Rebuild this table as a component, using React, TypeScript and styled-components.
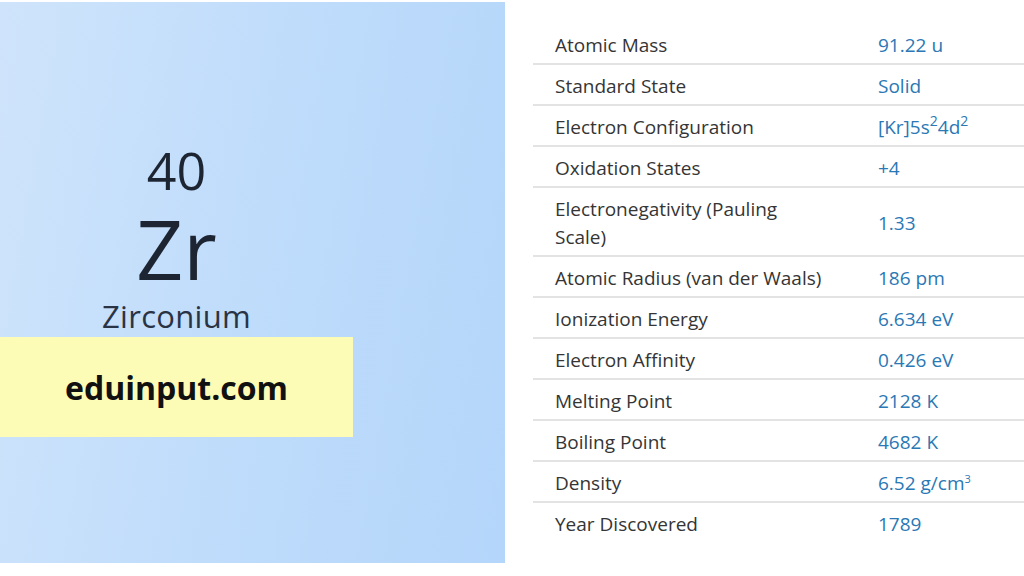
import React from 'react';
import styled, { createGlobalStyle } from 'styled-components';

const GlobalStyle = createGlobalStyle`
    html, body {
        margin: 0;
        padding: 0;
        background: #ffffff;
    }
    body {
        font-family: 'Open Sans', 'Noto Sans', sans-serif;
    }
`;

const Sup = styled.sup<{ $small?: boolean }>`
    font-size: ${(props) => (props.$small ? '11px' : '14px')};
    line-height: 0;
    vertical-align: ${(props) => (props.$small ? '7px' : '8px')};
`;

function getProperties() {
    return [
        { label: 'Atomic Mass', value: <>91.22 u</> },
        { label: 'Standard State', value: <>Solid</> },
        {
            label: 'Electron Configuration',
            value: (
                <>
                    [Kr]5s<Sup>2</Sup>4d<Sup>2</Sup>
                </>
            )
        },
        { label: 'Oxidation States', value: <>+4</> },
        { label: 'Electronegativity (Pauling Scale)', value: <>1.33</> },
        { label: 'Atomic Radius (van der Waals)', value: <>186 pm</> },
        { label: 'Ionization Energy', value: <>6.634 eV</> },
        { label: 'Electron Affinity', value: <>0.426 eV</> },
        { label: 'Melting Point', value: <>2128 K</> },
        { label: 'Boiling Point', value: <>4682 K</> },
        {
            label: 'Density',
            value: (
                <>
                    6.52 g/cm<Sup $small>3</Sup>
                </>
            )
        },
        { label: 'Year Discovered', value: <>1789</> }
    ];
}

export default function App() {
    const properties = getProperties();

    return (
        <>
            <GlobalStyle />
            <Page>
                <ElementPanel>
                    <ElementBlock>
                        <AtomicNumber>40</AtomicNumber>
                        <Symbol>Zr</Symbol>
                        <ElementName>Zirconium</ElementName>
                        <Banner>eduinput.com</Banner>
                    </ElementBlock>
                </ElementPanel>
                <PropertyTable>
                    {properties.map((p, i) => (
                        <Row key={p.label} $last={i === properties.length - 1}>
                            <Label>{p.label}</Label>
                            <Value>{p.value}</Value>
                        </Row>
                    ))}
                </PropertyTable>
            </Page>
        </>
    );
}

const Page = styled.div`
    display: flex;
    flex-direction: row;
    width: 1024px;
    height: 576px;
    overflow: hidden;
    background: #ffffff;
`;

const ElementPanel = styled.div`
    width: 505px;
    height: 561px;
    margin-top: 2px;
    flex-shrink: 0;
    background: linear-gradient(100deg, #cfe4fb 0%, #bfdcfb 50%, #b4d6fa 100%);
`;

const ElementBlock = styled.div`
    display: flex;
    flex-direction: column;
    align-items: center;
    width: 353px;
    padding-top: 142px;
    color: #1d2533;
`;

const AtomicNumber = styled.div`
    font-size: 52px;
    line-height: 1;
`;

const Symbol = styled.div`
    font-size: 82px;
    line-height: 1;
    margin-top: 11px;
`;

const ElementName = styled.div`
    font-size: 31px;
    line-height: 1;
    margin-top: 12px;
    color: #2a3344;
    letter-spacing: 0.3px;
`;

const Banner = styled.div`
    display: flex;
    align-items: center;
    justify-content: center;
    align-self: stretch;
    height: 100px;
    margin-top: 5px;
    background: #fdfcb6;
    color: #111111;
    font-size: 32px;
    font-weight: 700;
`;

const PropertyTable = styled.div`
    display: flex;
    flex-direction: column;
    flex: 1;
    margin-left: 28px;
    padding-top: 24px;
`;

const Row = styled.div<{ $last?: boolean }>`
    display: grid;
    grid-template-columns: 345px 1fr;
    align-items: center;
    padding: 7px 0 4px;
    border-bottom: 2px solid ${(props) => (props.$last ? 'transparent' : '#e3e3e3')};
    font-size: 19px;
    line-height: 28px;
`;

const Label = styled.div`
    padding-left: 22px;
    padding-right: 51px;
    color: #353535;
`;

const Value = styled.div`
    color: #2a78b5;
`;
